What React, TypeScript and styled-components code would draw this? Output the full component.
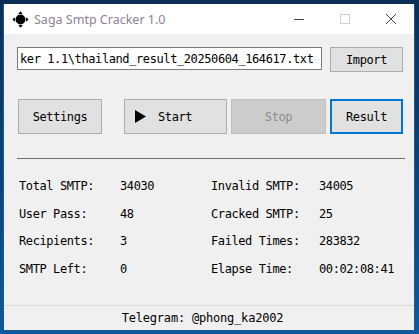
import React from "react";
import styled, { createGlobalStyle } from "styled-components";

const GlobalStyle = createGlobalStyle`
  html, body {
    margin: 0;
    padding: 0;
  }
  body {
    width: 419px;
    height: 334px;
    overflow: hidden;
    background: linear-gradient(180deg, #0b2f56 0%, #0c4a86 70%, #0e5a9c 100%);
  }
`;

const Desktop = styled.div`
  padding: 4px 0 0 3px;
`;

const Window = styled.div`
  width: 412px;
  height: 327px;
  background: #f0f0f0;
  display: flex;
  flex-direction: column;
  box-sizing: border-box;
  border: 1px solid #1a5a94;
  border-top: none;
`;

const TitleBar = styled.div`
  height: 30px;
  background: #ffffff;
  display: flex;
  align-items: center;
  padding-left: 8px;
  flex-shrink: 0;
`;

const AppIcon = styled.svg`
  width: 17px;
  height: 17px;
  margin-right: 5px;
`;

const Title = styled.span`
  font-family: "Noto Sans", "Open Sans", sans-serif;
  font-size: 12.5px;
  color: #8d8394;
  flex: 1;
`;

const WinButton = styled.div`
  width: 46px;
  height: 30px;
  display: flex;
  align-items: center;
  justify-content: center;
`;

const Content = styled.div`
  flex: 1;
  padding: 13px 11px 0 13px;
  font-family: "DejaVu Sans Mono", "Liberation Mono", monospace;
  font-size: 12px;
  letter-spacing: -0.4px;
`;

const FileRow = styled.div`
  display: flex;
  align-items: flex-start;
  gap: 8px;
`;

const PathBox = styled.div`
  width: 306px;
  height: 23px;
  box-sizing: border-box;
  background: #ffffff;
  border: 1px solid #7a7a7a;
  padding-left: 2px;
  display: flex;
  align-items: center;
  overflow: hidden;
  white-space: nowrap;
  color: #000;
`;

const Button = styled.div<{ $w: number; $h?: number; $disabled?: boolean; $focused?: boolean }>`
  width: ${(p) => p.$w}px;
  height: ${(p) => p.$h ?? 35}px;
  box-sizing: border-box;
  background: ${(p) => (p.$disabled ? "#cccccc" : "#e1e1e1")};
  border: ${(p) =>
    p.$focused ? "2px solid #0078d7" : p.$disabled ? "1px solid #bfbfbf" : "1px solid #adadad"};
  color: ${(p) => (p.$disabled ? "#8c8c8c" : "#000")};
  display: flex;
  align-items: center;
  justify-content: center;
  flex-shrink: 0;
`;

const PlayButton = styled(Button)`
  justify-content: flex-start;
  padding-left: 10px;
  gap: 12px;
`;

const ButtonRow = styled.div`
  display: flex;
  margin-top: 27px;
  margin-left: 1px;
  gap: 4px;
`;

const Spacer = styled.div`
  width: 19px;
`;

const Separator = styled.div`
  height: 1px;
  background: #6d6d6d;
  margin: 24px 0 0 0;
  width: 388px;
`;

const Stats = styled.div`
  display: grid;
  grid-template-columns: 101px 91px 108px auto;
  grid-auto-rows: 27.7px;
  align-items: center;
  margin: 13px 0 0 2px;
  color: #000;
`;

const StatusBar = styled.div`
  height: 24px;
  border-top: 1px solid #d9d9d9;
  display: flex;
  align-items: center;
  justify-content: center;
  padding-right: 13px;
  font-family: "DejaVu Sans Mono", "Liberation Mono", monospace;
  font-size: 12px;
  letter-spacing: -0.2px;
  color: #000;
  flex-shrink: 0;
`;

const stats: [string, string, string, string][] = [
  ["Total SMTP:", "34030", "Invalid SMTP:", "34005"],
  ["User Pass:", "48", "Cracked SMTP:", "25"],
  ["Recipients:", "3", "Failed Times:", "283832"],
  ["SMTP Left:", "0", "Elapse Time:", "00:02:08:41"],
];

export default function App() {
  return (
    <>
      <GlobalStyle />
      <Desktop>
        <Window>
          <TitleBar>
            <AppIcon viewBox="0 0 16 16">
              <circle cx="8" cy="8" r="4.6" fill="#000" />
              <path d="M8 0.3 L10.1 2.9 L5.9 2.9 Z" fill="#000" />
              <path d="M8 15.7 L10.1 13.1 L5.9 13.1 Z" fill="#000" />
              <path d="M0.3 8 L2.9 5.9 L2.9 10.1 Z" fill="#000" />
              <path d="M15.7 8 L13.1 5.9 L13.1 10.1 Z" fill="#000" />
            </AppIcon>
            <Title>Saga Smtp Cracker 1.0</Title>
            <WinButton>
              <svg width="10" height="10" viewBox="0 0 10 10">
                <path d="M0 5.5 H10" stroke="#444" strokeWidth="1" />
              </svg>
            </WinButton>
            <WinButton>
              <svg width="10" height="10" viewBox="0 0 10 10">
                <rect x="0.5" y="0.5" width="9" height="9" fill="none" stroke="#cfcfcf" strokeWidth="1" />
              </svg>
            </WinButton>
            <WinButton>
              <svg width="10" height="10" viewBox="0 0 10 10">
                <path d="M0 0 L10 10 M10 0 L0 10" stroke="#444" strokeWidth="1" />
              </svg>
            </WinButton>
          </TitleBar>
          <Content>
            <FileRow>
              <PathBox>ker 1.1\thailand_result_20250604_164617.txt</PathBox>
              <Button $w={73} $h={25}>Import</Button>
            </FileRow>
            <ButtonRow>
              <Button $w={84}>Settings</Button>
              <Spacer />
              <PlayButton $w={103}>
                <svg width="11" height="13" viewBox="0 0 11 13">
                  <path d="M0 0 L11 6.5 L0 13 Z" fill="#000" />
                </svg>
                <span>Start</span>
              </PlayButton>
              <Button $w={95} $disabled>Stop</Button>
              <Button $w={73} $focused>Result</Button>
            </ButtonRow>
            <Separator />
            <Stats>
              {stats.map((r) => r.map((c, i) => <span key={r[0] + i}>{c}</span>))}
            </Stats>
          </Content>
          <StatusBar>Telegram: @phong_ka2002</StatusBar>
        </Window>
      </Desktop>
    </>
  );
}
